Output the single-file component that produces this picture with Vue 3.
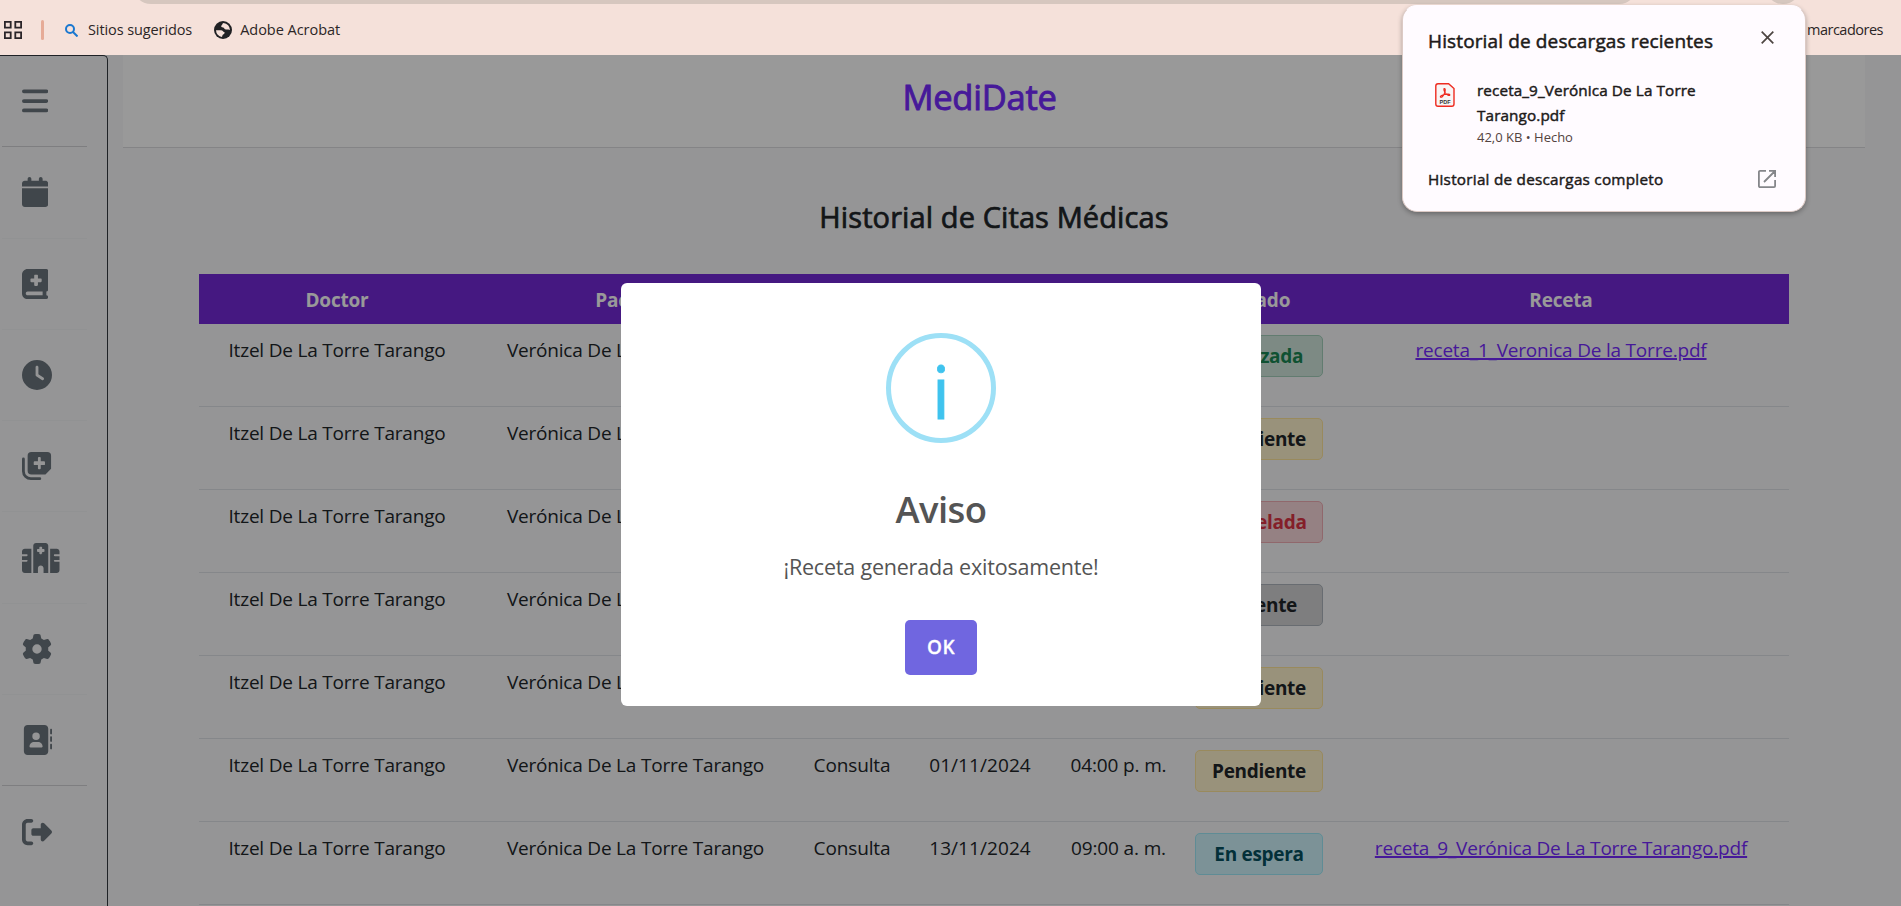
<script setup>
const nav = [
  { id: 'menu', w: 448, strong: true, d: 'M32 59H416a32 32 0 0 1 0 64H32a32 32 0 0 1 0-64zM32 224H416a32 32 0 0 1 0 64H32a32 32 0 0 1 0-64zM32 384H416a32 32 0 0 1 0 64H32a32 32 0 0 1 0-64z' },
  { id: 'calendar', w: 448, d: 'M96 32V64H48C21.5 64 0 85.5 0 112v48H448V112c0-26.5-21.5-48-48-48H352V32c0-17.7-14.3-32-32-32s-32 14.3-32 32V64H160V32c0-17.7-14.3-32-32-32S96 14.3 96 32zM448 192H0V464c0 26.5 21.5 48 48 48H400c26.5 0 48-21.5 48-48V192z' },
  { id: 'book', w: 448, d: 'M0 96C0 43 43 0 96 0H384h32c17.7 0 32 14.3 32 32V352c0 17.7-14.3 32-32 32v64c17.7 0 32 14.3 32 32s-14.3 32-32 32H384 96c-53 0-96-43-96-96V96zM64 416c0 17.7 14.3 32 32 32H352V384H96c-17.7 0-32 14.3-32 32zM208 112v48H160c-8.8 0-16 7.2-16 16v32c0 8.8 7.2 16 16 16h48v48c0 8.8 7.2 16 16 16h32c8.8 0 16-7.2 16-16V224h48c8.8 0 16-7.2 16-16V176c0-8.8-7.2-16-16-16H272V112c0-8.8-7.2-16-16-16H224c-8.8 0-16 7.2-16 16z' },
  { id: 'clock', w: 512, d: 'M256 0a256 256 0 1 1 0 512A256 256 0 1 1 256 0zM232 120V256c0 8 4 15.5 10.7 20l96 64c11 7.4 25.9 4.4 33.3-6.7s4.4-25.9-6.7-33.3L280 243.2V120c0-13.3-10.7-24-24-24s-24 10.7-24 24z' },
  { id: 'notes', w: 512, d: 'M160 16H432a64 64 0 0 1 64 64V304L400 400H160a64 64 0 0 1-64-64V80a64 64 0 0 1 64-64zM272 120V176H216a16 16 0 0 0-16 16v32a16 16 0 0 0 16 16h56v56a16 16 0 0 0 16 16h16a16 16 0 0 0 16-16V240h56a16 16 0 0 0 16-16V192a16 16 0 0 0-16-16H320V120a16 16 0 0 0-16-16H288a16 16 0 0 0-16 16zM24 112a24 24 0 0 1 24 24V344a104 104 0 0 0 104 104H304a24 24 0 0 1 0 48H152A152 152 0 0 1 0 344V136a24 24 0 0 1 24-24z' },
  { id: 'hospital', w: 640, d: 'M192 48c0-26.5 21.5-48 48-48H400c26.5 0 48 21.5 48 48V512H368V432c0-26.5-21.5-48-48-48s-48 21.5-48 48v80H192V48zM48 96H160V512H48c-26.5 0-48-21.5-48-48V320H80c8.8 0 16-7.2 16-16s-7.2-16-16-16H0V224H80c8.8 0 16-7.2 16-16s-7.2-16-16-16H0V144c0-26.5 21.5-48 48-48zm544 0c26.5 0 48 21.5 48 48v48H560c-8.8 0-16 7.2-16 16s7.2 16 16 16h80v64H560c-8.8 0-16 7.2-16 16s7.2 16 16 16h80V464c0 26.5-21.5 48-48 48H480V96H592zM312 64c-8.8 0-16 7.2-16 16v24H272c-8.8 0-16 7.2-16 16v16c0 8.8 7.2 16 16 16h24v24c0 8.8 7.2 16 16 16h16c8.8 0 16-7.2 16-16V152h24c8.8 0 16-7.2 16-16V120c0-8.8-7.2-16-16-16H344V80c0-8.8-7.2-16-16-16H312z' },
  { id: 'gear', w: 512, d: 'M495.9 166.6c3.2 8.7 .5 18.4-6.4 24.6l-43.3 39.4c1.1 8.3 1.7 16.8 1.7 25.4s-.6 17.1-1.7 25.4l43.3 39.4c6.9 6.2 9.6 15.9 6.4 24.6c-4.4 11.9-9.7 23.3-15.8 34.3l-4.7 8.1c-6.6 11-14 21.4-22.1 31.2c-5.9 7.2-15.7 9.6-24.5 6.8l-55.7-17.7c-13.4 10.3-28.2 18.9-44 25.4l-12.5 57.1c-2 9.1-9 16.3-18.2 17.8c-13.8 2.3-28 3.5-42.5 3.5s-28.7-1.2-42.5-3.5c-9.2-1.5-16.2-8.7-18.2-17.8l-12.5-57.1c-15.8-6.5-30.6-15.1-44-25.4L83.1 425.9c-8.8 2.8-18.6 .3-24.5-6.8c-8.1-9.8-15.5-20.2-22.1-31.2l-4.7-8.1c-6.1-11-11.4-22.4-15.8-34.3c-3.2-8.7-.5-18.4 6.4-24.6l43.3-39.4C64.6 273.1 64 264.6 64 256s.6-17.1 1.7-25.4L22.4 191.2c-6.9-6.2-9.6-15.9-6.4-24.6c4.4-11.9 9.7-23.3 15.8-34.3l4.7-8.1c6.6-11 14-21.4 22.1-31.2c5.9-7.2 15.7-9.6 24.5-6.8l55.7 17.7c13.4-10.3 28.2-18.9 44-25.4l12.5-57.1c2-9.1 9-16.3 18.2-17.8C227.3 1.2 241.5 0 256 0s28.7 1.2 42.5 3.5c9.2 1.5 16.2 8.7 18.2 17.8l12.5 57.1c15.8 6.5 30.6 15.1 44 25.4l55.7-17.7c8.8-2.8 18.6-.3 24.5 6.8c8.1 9.8 15.5 20.2 22.1 31.2l4.7 8.1c6.1 11 11.4 22.4 15.8 34.3zM256 336a80 80 0 1 0 0-160 80 80 0 1 0 0 160z' },
  { id: 'contacts', w: 512, strong: true, d: 'M96 0C60.7 0 32 28.7 32 64V448c0 35.3 28.7 64 64 64H384c35.3 0 64-28.7 64-64V64c0-35.3-28.7-64-64-64H96zM208 288h64c44.2 0 80 35.8 80 80c0 8.8-7.2 16-16 16H144c-8.8 0-16-7.2-16-16c0-44.2 35.8-80 80-80zm-32-96a64 64 0 1 1 128 0 64 64 0 1 1-128 0zM512 80c0-8.8-7.2-16-16-16s-16 7.2-16 16v64c0 8.8 7.2 16 16 16s16-7.2 16-16V80zM496 192c-8.8 0-16 7.2-16 16v64c0 8.8 7.2 16 16 16s16-7.2 16-16V208c0-8.8-7.2-16-16-16zm16 144c0-8.8-7.2-16-16-16s-16 7.2-16 16v64c0 8.8 7.2 16 16 16s16-7.2 16-16V336z' },
  { id: 'logout', w: 512, last: true, d: 'M377.9 105.9L500.7 228.7c7.2 7.2 11.3 17.1 11.3 27.3s-4.1 20.1-11.3 27.3L377.9 406.1c-6.4 6.4-15 9.9-24 9.9c-18.7 0-33.9-15.2-33.9-33.9l0-62.1-128 0c-17.7 0-32-14.3-32-32l0-64c0-17.7 14.3-32 32-32l128 0 0-62.1c0-18.7 15.2-33.9 33.9-33.9c9 0 17.6 3.6 24 9.9zM160 96L96 96c-17.7 0-32 14.3-32 32l0 256c0 17.7 14.3 32 32 32l64 0c17.7 0 32 14.3 32 32s-14.3 32-32 32l-64 0c-53 0-96-43-96-96L0 128C0 75 43 32 96 32l64 0c17.7 0 32 14.3 32 32s-14.3 32-32 32z' },
]

const columns = ['Doctor', 'Paciente', '', '', '', 'Estado', 'Receta']
const rows = [
  { estado: 'Realizada', tone: 'success', receta: 'receta_1_Veronica De la Torre.pdf' },
  { estado: 'Pendiente', tone: 'warning' },
  { estado: 'Cancelada', tone: 'danger' },
  { estado: 'Ausente', tone: 'dark' },
  { estado: 'Pendiente', tone: 'warning' },
  { motivo: 'Consulta', fecha: '01/11/2024', hora: '04:00 p. m.', estado: 'Pendiente', tone: 'warning' },
  { motivo: 'Consulta', fecha: '13/11/2024', hora: '09:00 a. m.', estado: 'En espera', tone: 'info', receta: 'receta_9_Verónica De La Torre Tarango.pdf' },
]
</script>

<template>
  <div class="screen">
    <header class="bookmarks">
      <div class="omnibox"></div>
      <div class="avatar"></div>
      <svg class="apps" width="18" height="18" viewBox="0 0 18 18" fill="none" stroke="#2b2529" stroke-width="1.8">
        <path d="M.9 .9h5.8v5.8H.9zM11.3 .9h5.8v5.8h-5.8zM.9 11.3h5.8v5.8H.9zM11.3 11.3h5.8v5.8h-5.8z" />
      </svg>
      <span class="sep"></span>
      <svg class="lens" width="13" height="13" viewBox="0 0 13 13" fill="none" stroke="#1a78d0" stroke-width="2">
        <circle cx="5" cy="5" r="4" /><path d="M8 8l4.5 4.5" />
      </svg>
      <span class="mark sites">Sitios sugeridos</span>
      <svg class="globe" width="18" height="18" viewBox="0 0 18 18">
        <circle cx="9" cy="9" r="9" fill="#202124" />
        <path d="M2 9.2H7C8.8 9.2 9.2 11 10.8 11.4C10.6 13.2 8.6 13 8.4 14.6L8 16A7 7 0 0 1 2 9.2Z" fill="#f5e1da" />
        <path d="M9.5 2C8 2.4 8.6 4 7.4 4.4C6.6 5.6 8 6.6 9.4 6.4L11 8.2C12.5 9 13.5 8.2 16 9A7 7 0 0 0 9.5 2Z" fill="#f5e1da" />
      </svg>
      <span class="mark acrobat">Adobe Acrobat</span>
      <span class="mark all">marcadores</span>
    </header>

    <div class="page">
      <aside class="sidebar">
        <div v-for="n in nav" :key="n.id" class="item" :class="{ strong: n.strong, last: n.last }">
          <svg :width="n.w * 30 / 512" height="30" :viewBox="`0 0 ${n.w} 512`" fill="currentColor">
            <path fill-rule="evenodd" :d="n.d" />
          </svg>
        </div>
      </aside>

      <main class="main">
        <div class="brand"><h1>MediDate</h1></div>
        <h2>Historial de Citas Médicas</h2>
        <table>
          <colgroup>
            <col class="c1"><col class="c2"><col class="c3"><col class="c4"><col class="c5"><col class="c6"><col class="c7">
          </colgroup>
          <thead>
            <tr><th v-for="(c, i) in columns" :key="i">{{ c }}</th></tr>
          </thead>
          <tbody>
            <tr v-for="(r, i) in rows" :key="i">
              <td>Itzel De La Torre Tarango</td>
              <td>Verónica De La Torre Tarango</td>
              <td class="plain">{{ r.motivo }}</td>
              <td class="num">{{ r.fecha }}</td>
              <td class="plain">{{ r.hora }}</td>
              <td><div class="badge" :class="r.tone">{{ r.estado }}</div></td>
              <td><a v-if="r.receta">{{ r.receta }}</a></td>
            </tr>
          </tbody>
        </table>
      </main>
      <div class="backdrop"></div>
    </div>

    <section class="modal">
      <div class="ring"><span>i</span></div>
      <h3>Aviso</h3>
      <p>¡Receta generada exitosamente!</p>
      <button>OK</button>
    </section>

    <section class="downloads">
      <div class="dl-head">
        <span class="dl-title">Historial de descargas recientes</span>
        <svg width="13" height="13" viewBox="0 0 13 13" stroke="#4d4542" stroke-width="1.7"><path d="M.7 .7L12.3 12.3M12.3 .7L.7 12.3" /></svg>
      </div>
      <div class="dl-file">
        <svg width="20" height="24" viewBox="0 0 20 24">
          <path d="M3 .8H13.6L19 5.6V21a2.2 2.2 0 0 1-2.2 2.2H3A2.2 2.2 0 0 1 .8 21V3A2.2 2.2 0 0 1 3 .8Z" fill="#f8f5f5" stroke="#ee2b20" stroke-width="1.4" />
          <path d="M9.2 5.6C10.6 5.2 10.4 8.2 9.5 10.2C8.6 12.2 6.8 14.6 5.6 14.2C4.6 13.5 7 12 9.6 11.5C12 11 14.9 10.9 14.8 12C14.4 13.2 11.8 11.8 10.4 10C9.2 8.4 8.4 6 9.2 5.6Z" fill="none" stroke="#ee2b20" stroke-width="1.2" />
          <text x="10" y="20.8" text-anchor="middle" class="pdf">PDF</text>
        </svg>
        <div class="dl-info">
          <div class="dl-name">receta_9_Verónica De La Torre<br>Tarango.pdf</div>
          <div class="dl-meta">42,0 KB • Hecho</div>
        </div>
      </div>
      <div class="dl-foot">
        <span>Historial de descargas completo</span>
        <svg width="18" height="18" viewBox="0 0 18 18" fill="none" stroke="#85868a" stroke-width="1.8">
          <path d="M8 .9H2A1.1 1.1 0 0 0 .9 2V16A1.1 1.1 0 0 0 2 17.1H16A1.1 1.1 0 0 0 17.1 16V10M11 .9H17.1V7M17 1L6 12" />
        </svg>
      </div>
    </section>
  </div>
</template>

<style>
body { margin: 0; overflow: hidden; }
</style>

<style scoped>
.screen { position: relative; width: 1901px; height: 906px; overflow: hidden; display: flex; flex-direction: column; font-family: "Open Sans", "Noto Sans", sans-serif; color: #212529; }
.screen * { box-sizing: border-box; }
svg { display: block; flex: none; }

.bookmarks { position: relative; flex: none; height: 55px; background: #f5e1da; display: flex; align-items: center; padding: 4px 0 0 4px; font-size: 14.5px; line-height: 20px; color: #2c2626; overflow: hidden; }
.omnibox { position: absolute; left: 133px; top: -32px; width: 1504px; height: 36px; border-radius: 18px; background: #d6c7bf; }
.avatar { position: absolute; left: 1765px; top: -32px; width: 36px; height: 36px; border-radius: 18px; background: #d6c7bf; }
.sep { width: 3px; height: 20px; margin: 0 21px 0 19px; border-radius: 2px; background: #e6ab97; }
.mark { white-space: nowrap; letter-spacing: -0.1px; }
.lens { margin-top: 1px; }
.sites { margin-left: 10px; }
.globe { margin-left: 22px; }
.acrobat { margin-left: 8px; letter-spacing: -0.03px; }
.all { margin-left: auto; margin-right: 18px; letter-spacing: -0.5px; }

.page { position: relative; flex: 1; min-height: 0; display: flex; background: #f8f9fa; }
.backdrop { position: absolute; inset: 0; background: rgba(0, 0, 0, 0.4); }

.sidebar { flex: none; width: 108px; height: 900px; border: 1px solid #343a40; border-left: 0; border-bottom: 0; border-top-right-radius: 5px; padding: 0 20px 0 2px; color: #6c757d; }
.item { height: 91.3px; display: flex; align-items: center; padding-left: 20px; border-bottom: 1px solid #f2f3f5; }
.item.strong { border-bottom-color: #d2d3d5; }
.item.last { border-bottom: 0; }

.main { margin-left: 15px; width: 1742px; display: flex; flex-direction: column; }
.brand { height: 93px; background: #fff; border-bottom: 1px solid #dcdddf; display: flex; justify-content: center; }
h1 { margin: 17px 0 0; padding-right: 29px; font-size: 34.5px; line-height: 50px; font-weight: 500; letter-spacing: -0.25px; color: #762aff; -webkit-text-stroke: 0.9px; }
h2 { margin: 47px 0 0; height: 79px; text-align: center; font-size: 29px; line-height: 44px; font-weight: 500; letter-spacing: 0.1px; -webkit-text-stroke: 0.7px; }

table { margin-left: 76px; width: 1590px; table-layout: fixed; border-collapse: separate; border-spacing: 0; font-size: 19px; line-height: 30px; letter-spacing: -0.2px; text-align: center; }
.c1 { width: 276px; } .c2 { width: 321px; } .c3 { width: 112px; } .c4 { width: 144px; } .c5 { width: 133px; } .c6 { width: 148px; } .c7 { width: 456px; }
th { height: 50px; padding: 1px 0 0; background: #7328d8; color: #fff; font-weight: 700; }
td { height: 83px; padding: 11px 10px 0; vertical-align: top; border-bottom: 1px solid #dee2e6; white-space: nowrap; }
td.plain { letter-spacing: -0.14px; padding-left: 0; padding-right: 0; }
td.num { letter-spacing: 0.07px; padding-left: 0; padding-right: 0; }
a { color: #762aff; text-decoration: underline; text-decoration-thickness: 1.6px; text-underline-offset: 1px; }
.badge { height: 42px; border: 1px solid; border-radius: 5px; font-weight: 700; line-height: 41px; letter-spacing: -0.3px; }
.success { background: #d1e7dd; border-color: #a3cfbb; color: #198754; }
.warning { background: #fff3cd; border-color: #ffe69c; color: #212529; }
.danger { background: #f8d7da; border-color: #f1aeb5; color: #dc3545; }
.dark { background: #d3d3d4; border-color: #adb5bd; color: #212529; }
.info { background: #cff4fc; border-color: #9eeaf9; color: #055160; }

.modal { position: absolute; left: 621px; top: 283px; width: 640px; height: 423px; border-radius: 6px; background: #fff; color: #545454; display: flex; flex-direction: column; align-items: center; }
.ring { flex: none; width: 110px; height: 110px; margin-top: 50px; border: 5px solid #9de0f6; border-radius: 50%; color: #3fc3ee; display: flex; justify-content: center; font-size: 73px; line-height: 100px; -webkit-text-stroke: 0.8px; }
.ring span { margin-top: 3px; }
h3 { margin: 41px 0 0; font-size: 36.5px; line-height: 50px; font-weight: 600; letter-spacing: -0.6px; }
p { margin: 16px 0 0; font-size: 21.5px; line-height: 34px; letter-spacing: -0.2px; }
button { margin-top: 36px; width: 72px; height: 55px; padding: 0 0 1px; border: 0; border-radius: 5px; background: #7066e0; color: #fff; font: 600 19px/55px "Open Sans", sans-serif; letter-spacing: 0.5px; -webkit-text-stroke: 0.3px; }

.downloads { position: absolute; left: 1402px; top: 5px; width: 404px; height: 207px; padding: 0 29px 0 25px; border-radius: 15px; background: #fffbff; border: 1px solid #dccac5; border-top-color: #fffbff; box-shadow: 0 2px 5px rgba(0, 0, 0, 0.3); color: #201a19; display: flex; flex-direction: column; font-weight: 500; }
.dl-head { display: flex; justify-content: space-between; padding-top: 19px; }
.dl-head svg { margin-top: 6px; margin-right: 2px; }
.dl-title { font-size: 19px; line-height: 32px; letter-spacing: 0.13px; -webkit-text-stroke: 0.5px; }
.dl-file { display: flex; margin-top: 21px; padding-left: 7px; }
.dl-file svg { margin-top: 5px; }
.dl-info { margin-left: 22px; white-space: nowrap; }
.dl-name { font-size: 15.3px; line-height: 25px; letter-spacing: 0.1px; -webkit-text-stroke: 0.45px; }
.dl-meta { font-size: 13px; line-height: 18px; font-weight: 400; color: #534340; }
.dl-foot { display: flex; justify-content: space-between; align-items: center; margin-top: 21px; font-size: 15.3px; line-height: 24px; letter-spacing: 0.24px; }
.dl-foot span { -webkit-text-stroke: 0.45px; }
.pdf { font: 700 5.5px "Liberation Sans", sans-serif; fill: #333; }
</style>
